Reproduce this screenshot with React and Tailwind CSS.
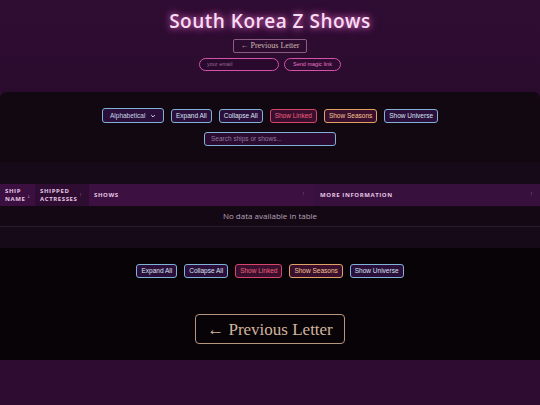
const sans = { fontFamily: '"Liberation Sans", Arial, sans-serif' };
const title = { fontFamily: '"Open Sans", "DejaVu Sans", sans-serif' };
const serif = { fontFamily: '"Liberation Serif", "DejaVu Serif", serif' };

const ControlButtons = () => (
    <div className="flex items-center justify-center gap-[7px]" style={sans}>
        <button className="h-[14px] px-[4px] rounded-[3px] border border-[#7fb2d6] bg-[#2a0f3a] text-[6.5px] text-[#d8e4f2]">Expand All</button>
        <button className="h-[14px] px-[4px] rounded-[3px] border border-[#7fb2d6] bg-[#2a0f3a] text-[6.5px] text-[#d8e4f2]">Collapse All</button>
        <button className="h-[14px] px-[4px] rounded-[3px] border border-[#d8456a] bg-[#3a0f2e] text-[6.5px] text-[#f0607e]">Show Linked</button>
        <button className="h-[14px] px-[4px] rounded-[3px] border border-[#e0a264] bg-[#3a0f2e] text-[6.5px] text-[#f6c68e]">Show Seasons</button>
        <button className="h-[14px] px-[4px] rounded-[3px] border border-[#7fb2d6] bg-[#2a0f3a] text-[6.5px] text-[#d8e4f2]">Show Universe</button>
    </div>
);

const App = () => {
    return (
        <div className="w-[540px] h-[405px] overflow-hidden bg-[#2c0c2f] flex flex-col">
            {/* header */}
            <div className="h-[92px] flex flex-col items-center bg-gradient-to-b from-[#2f0d33] to-[#2a0b2d]">
                <h1
                    className="mt-[8px] text-[19px] leading-[26px] font-semibold tracking-[0.5px] text-[#f8dcf3]"
                    style={{ ...title, textShadow: '0 0 6px rgba(255,120,220,0.8), 0 0 12px rgba(230,90,200,0.45)' }}
                >
                    South Korea Z Shows
                </h1>
                <button
                    className="mt-[5px] h-[14px] px-[6px] rounded-[2px] border border-[#8d5c80] text-[8px] leading-none text-[#d2bcb2]"
                    style={serif}
                >
                    ← Previous Letter
                </button>
                <div className="mt-[5px] flex items-center gap-[5px]" style={sans}>
                    <div className="w-[80px] h-[13px] rounded-full border border-[#d452aa] bg-[#2a0a2c] px-[7px] flex items-center text-[5.5px] text-[#9a6896]">
                        your email
                    </div>
                    <button className="w-[57px] h-[13px] rounded-full border border-[#d452aa] bg-[#2e0b30] text-[5.5px] text-[#e878c8]">
                        Send magic link
                    </button>
                </div>
            </div>

            {/* controls */}
            <div className="h-[70px] rounded-t-[6px] bg-[#120812] flex flex-col items-center pt-[16px] gap-[9px]">
                <div className="flex items-center gap-[7px]" style={sans}>
                    <div className="w-[62px] h-[15px] rounded-[3px] border border-[#7fb2d6] bg-[#2a0f3a] flex items-center justify-between px-[7px] text-[6.5px] text-[#c9d6ea]">
                        <span>Alphabetical</span>
                        <svg width="6" height="6" viewBox="0 0 10 10">
                            <path d="M2 3.5 L5 6.5 L8 3.5" fill="none" stroke="#dfe6f2" strokeWidth="1.6" />
                        </svg>
                    </div>
                    <ControlButtons />
                </div>
                <div className="w-[132px] h-[14px] rounded-[3px] border border-[#7fb2d6] bg-[#2c0b30] flex items-center px-[6px] text-[6.5px] text-[#8e7aa0]" style={sans}>
                    Search ships or shows...
                </div>
            </div>

            {/* table */}
            <div className="h-[86px] bg-[#170a18] pt-[22px]">
                <div className="flex h-[22px] text-[6px] font-bold tracking-[0.6px] text-[#e8c6e6]" style={title}>
                    <div className="w-[35px] bg-[#3b1040] flex items-center pl-[5px] leading-[8px] relative">
                        SHIP<br />NAME
                        <span className="absolute right-[4px] top-[9px] text-[4px] text-[#a07aa0]">↓</span>
                    </div>
                    <div className="w-[54px] bg-[#2f0c32] flex items-center pl-[5px] leading-[8px] relative">
                        SHIPPED<br />ACTRESSES
                        <span className="absolute right-[6px] top-[7px] text-[4px] text-[#7a5a7c]">⋮</span>
                    </div>
                    <div className="w-[225px] bg-[#3c1041] flex items-center pl-[5px] relative">
                        SHOWS
                        <span className="absolute right-[8px] top-[7px] text-[4px] text-[#7a5a7c]">⋮</span>
                    </div>
                    <div className="flex-1 bg-[#38103d] flex items-center pl-[6px] relative">
                        MORE INFORMATION
                        <span className="absolute right-[6px] top-[7px] text-[4px] text-[#7a5a7c]">⋮</span>
                    </div>
                </div>
                <div className="h-[21px] flex items-center justify-center border-b border-[#2e1830] text-[8px] text-[#b9a3bb] bg-[#140814]" style={title}>
                    No data available in table
                </div>
            </div>

            {/* bottom */}
            <div className="h-[112px] bg-[#070307] flex flex-col items-center pt-[16px]">
                <ControlButtons />
                <button
                    className="mt-[36px] h-[30px] px-[11px] rounded-[4px] border border-[#b8967e] text-[17px] leading-none text-[#d2b49e]"
                    style={serif}
                >
                    ← Previous Letter
                </button>
            </div>

            <div className="flex-1 bg-[#2e0b30]" />
        </div>
    );
};

export default App;
